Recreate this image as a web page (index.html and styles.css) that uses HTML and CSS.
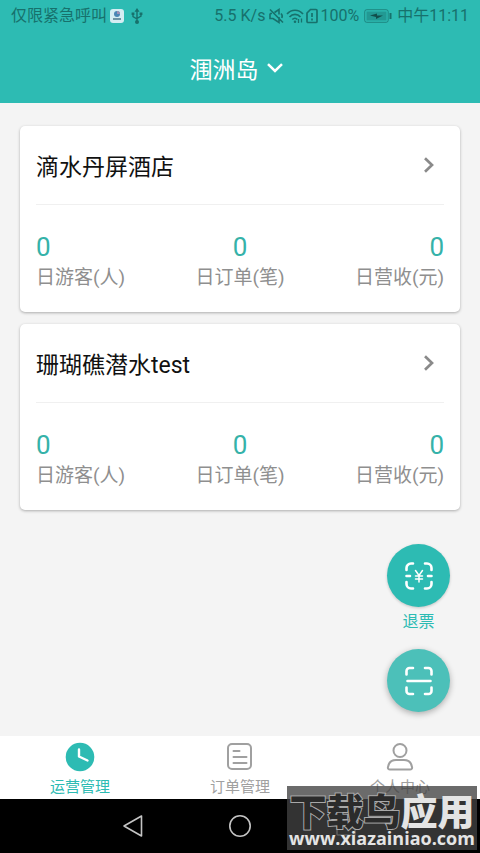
FILE: index.html
```html
<!DOCTYPE html>
<html lang="zh-CN">
<head>
<meta charset="utf-8">
<meta name="viewport" content="width=device-width, initial-scale=1">
<title>运营管理</title>
<link rel="stylesheet" href="styles.css">
</head>
<body>
<header class="top">
  <div class="status">
    <div class="status-group">
      <span>仅限紧急呼叫</span>
      <svg class="app-icon" width="14" height="14" viewBox="0 0 14 14"><rect width="14" height="14" rx="3" fill="#d5edf3"/><circle cx="7" cy="5" r="3" fill="#4a86b5"/><path d="M7 2a3 3 0 0 1 3 3L7 5z" fill="#a08fb5"/><path d="M3 10h8" stroke="#436d82" stroke-width="1.4"/></svg>
      <svg class="usb-icon" width="12" height="16" viewBox="0 0 12 16" fill="none" stroke="currentColor" stroke-width="1.4"><path d="M6 2v11M2 6v2.500l4 2.500M10 6v2L6 10.500"/><path d="M6 0 8.500 3.800h-5zM.6 4.500h2.800v2.500H.6zM8.600 4.500h2.800v2.500H8.600z" fill="currentColor" stroke="none"/><circle cx="6" cy="13.900" r="2" fill="currentColor" stroke="none"/></svg>
    </div>
    <div class="status-group status-right">
      <span>5.5 K/s</span>
      <svg class="mute" width="15" height="16" viewBox="0 0 15 16" fill="none" stroke="currentColor" stroke-width="1.600"><path d="M1 5.500v5h3l6 4V9M5.500 4.500 10 1.500v5M1 5.500h2M1 1.500l13 13M12 5.500c1 1 1.500 3 .8 4.500"/></svg>
      <svg width="18" height="16" viewBox="0 0 18 16" fill="none" stroke="currentColor" stroke-width="1.700"><path d="M1 6c4.500-5 11.500-5 16 0M3.500 9c3.200-3.500 7.800-3.500 11 0M6.300 11.500c1.700-1.700 3.700-1.700 5 0"/><circle cx="9" cy="13.800" r="1.300" fill="currentColor" stroke="none"/><path d="M12.500 11v4M15.500 10.500v4" stroke-width="1.300"/></svg>
      <svg width="12" height="16" viewBox="0 0 12 16" fill="none" stroke="currentColor" stroke-width="1.700"><path d="M4.500 1.500H10a1 1 0 0 1 1 1v11a1 1 0 0 1-1 1H2a1 1 0 0 1-1-1V5zM6 5v4M6 10.500v2"/></svg>
      <span>100%</span>
      <svg class="battery" width="28" height="14" viewBox="0 0 28 14"><rect x=".7" y=".7" width="23.500" height="12.600" rx="2" fill="none" stroke="currentColor" stroke-opacity=".7"/><rect x="2.500" y="2.500" width="20" height="9" fill="currentColor" opacity=".45"/><path d="M6 6.500l7-2v2h6l-7 3.500V8z" fill="#114e4b"/><path d="M26.500 4v6" stroke="currentColor" stroke-width="2"/></svg>
      <span>中午11:11</span>
    </div>
  </div>
  <button class="place" type="button"><span>涠洲岛</span>
    <svg width="16" height="10" viewBox="0 0 16 10" fill="none" stroke="currentColor" stroke-width="2.500"><path d="M1 1.200 8 8l7-6.800"/></svg>
  </button>
</header>

<main class="content">
  <section class="card">
    <a class="card-head" href="#hotel"><h2>滴水丹屏酒店</h2>
      <svg width="10" height="16" viewBox="0 0 10 16" fill="none" stroke="currentColor" stroke-width="2.700"><path d="M1 1.200 8 8l-7 6.800"/></svg></a>
    <dl class="stats">
      <div><dt>日游客(人)</dt><dd>0</dd></div>
      <div><dt>日订单(笔)</dt><dd>0</dd></div>
      <div><dt>日营收(元)</dt><dd>0</dd></div>
    </dl>
  </section>
  <section class="card">
    <a class="card-head" href="#diving"><h2>珊瑚礁潜水test</h2>
      <svg width="10" height="16" viewBox="0 0 10 16" fill="none" stroke="currentColor" stroke-width="2.700"><path d="M1 1.200 8 8l-7 6.800"/></svg></a>
    <dl class="stats">
      <div><dt>日游客(人)</dt><dd>0</dd></div>
      <div><dt>日订单(笔)</dt><dd>0</dd></div>
      <div><dt>日营收(元)</dt><dd>0</dd></div>
    </dl>
  </section>

  <div class="actions">
    <button class="fab" type="button" aria-labelledby="refund">
      <svg width="28" height="28" viewBox="0 0 28 28" fill="none" stroke="currentColor" stroke-width="2.600" stroke-linecap="round"><path d="M1.500 8V6A4.500 4.500 0 0 1 6 1.500h2M20 1.500h2A4.500 4.500 0 0 1 26.500 6v2M26.500 20v2a4.500 4.500 0 0 1-4.500 4.500h-2M8 26.500H6A4.500 4.500 0 0 1 1.500 22v-2M1.500 14h3.500M23 14h3.500"/><path d="M10.500 8.500 14 13.500l3.500-5M14 13.500v6.500M10.500 14h7M10.500 17h7" stroke-width="1.500"/></svg>
    </button>
    <span class="fab-label" id="refund">退票</span>
    <button class="fab fab-scan" type="button" aria-label="扫一扫">
      <svg width="30" height="30" viewBox="0 0 30 30" fill="none" stroke="currentColor" stroke-width="2.600" stroke-linecap="round"><path d="M2.500 8.500V5a3 3 0 0 1 3-3H9M21 2h3.500a3 3 0 0 1 3 3v3.500M27.500 21.500V25a3 3 0 0 1-3 3H21M9 28H5.500a3 3 0 0 1-3-3v-3.500M3.500 15h23"/></svg>
    </button>
  </div>
</main>

<footer class="bottom">
  <nav class="tabs">
    <a class="tab tab-active" href="#operate">
      <svg width="30" height="30" viewBox="0 0 30 30"><circle cx="15" cy="15" r="14.300" fill="currentColor"/><path d="M14 7.500v7l8.500 4" fill="none" stroke="#fff" stroke-width="2.400" stroke-linecap="round" stroke-linejoin="round"/></svg>
      <span>运营管理</span></a>
    <a class="tab" href="#orders">
      <svg width="30" height="30" viewBox="0 0 30 30" fill="none" stroke="currentColor" stroke-width="2" stroke-linecap="round"><rect x="3" y="2" width="23" height="25" rx="4"/><path d="M8.500 9h6M8.500 15h13M8.500 21h13"/></svg>
      <span>订单管理</span></a>
    <a class="tab" href="#me">
      <svg width="30" height="30" viewBox="0 0 30 30" fill="none" stroke="currentColor" stroke-width="2"><circle cx="15" cy="8.500" r="6.500"/><path d="M5 27.500h20c1.500 0 2.300-.8 2.100-2.200-.7-5-3.600-7.300-8.100-7.300h-8c-4.500 0-7.400 2.300-8.100 7.300-.2 1.400.6 2.200 2.100 2.200z"/></svg>
      <span>个人中心</span></a>
  </nav>
  <div class="system">
    <button type="button" aria-label="返回"><svg width="22" height="24" viewBox="0 0 22 24" fill="none" stroke="currentColor" stroke-width="1.600" stroke-linejoin="round"><path d="M2 12 19.500 2v20z"/></svg></button>
    <button type="button" aria-label="主页"><svg width="24" height="24" viewBox="0 0 24 24" fill="none" stroke="currentColor" stroke-width="1.600"><circle cx="12" cy="12" r="10.200"/></svg></button>
    <button type="button" aria-label="最近"><svg width="22" height="20" viewBox="0 0 22 20" fill="none" stroke="currentColor" stroke-width="1.600"><rect x="1" y="1" width="18" height="18" rx="1"/></svg></button>
  </div>
  <div class="mark">
    <div class="mark-name"><span class="mark-dark">下载鸟</span>应用</div>
    <div class="mark-url">www.xiazainiao.com</div>
  </div>
</footer>
</body>
</html>
```
FILE: styles.css
```css
:root {
  --teal: #2dbbb3;
  --grey: #8f8f8f;
}
* { box-sizing: border-box; }
body {
  margin: 0;
  min-height: 100vh;
  display: flex;
  flex-direction: column;
  background: #f4f4f4;
  font-family: Roboto, "Noto Sans CJK SC", sans-serif;
}
svg { display: block; flex: none; }
button {
  padding: 0;
  border: 0;
  background: none;
  color: inherit;
  font: inherit;
}
a { color: inherit; text-decoration: none; }
h2, dl, dd { margin: 0; font-weight: 400; }

.top { background: var(--teal); color: #fff; }
.status {
  display: flex;
  justify-content: space-between;
  height: 32px;
  padding: 0 11px;
  color: #17716c;
  font-size: 16px;
  line-height: 34px;
  white-space: nowrap;
}
.status-group { display: flex; align-items: center; gap: 3px; }
.status-right { gap: 2px; }
.mute { margin-left: 2px; }
.usb-icon { margin-left: 4px; }
.battery { margin: 0 3px; }
.place {
  display: flex;
  align-items: center;
  justify-content: center;
  gap: 8px;
  width: 100%;
  height: 71px;
  padding-right: 8px;
  font-size: 23px;
}

.content {
  position: relative;
  flex: 1;
  display: flex;
  flex-direction: column;
  gap: 12px;
  padding: 23px 20px;
}
.card {
  padding: 0 16px 19px;
  border-radius: 5px;
  background: #fff;
  box-shadow: 0 1px 3px rgba(0, 0, 0, 0.3);
}
.card-head {
  display: flex;
  align-items: center;
  justify-content: space-between;
  height: 79px;
  padding-right: 10px;
  border-bottom: 1px solid #f0f0f0;
  color: #8a8a8a;
}
.card-head h2 { color: #111; font-size: 23px; }
.stats {
  display: flex;
  justify-content: space-between;
  padding-top: 28px;
}
.stats div { display: flex; flex-direction: column-reverse; text-align: center; }
.stats div:first-child { text-align: left; }
.stats div:last-child { text-align: right; }
.stats dt { color: var(--grey); font-size: 19px; line-height: 31px; }
.stats dd { color: #35b2a9; font-size: 26px; line-height: 29px; }

.actions {
  position: absolute;
  right: 30px;
  bottom: 24px;
  display: flex;
  flex-direction: column;
  align-items: center;
}
.fab {
  display: grid;
  place-items: center;
  width: 63px;
  height: 63px;
  border-radius: 50%;
  background: var(--teal);
  color: #fff;
  box-shadow: 0 1px 3px rgba(0, 0, 0, 0.2);
}
.fab-scan { background: #4cc0b9; box-shadow: 0 2px 6px rgba(0, 0, 0, 0.3); }
.fab-label {
  padding: 2px 0 14px;
  color: var(--teal);
  font-size: 16px;
  line-height: 26px;
}

.bottom { position: relative; }
.tabs { display: flex; height: 63px; background: #fff; }
.tab {
  flex: 1;
  display: flex;
  flex-direction: column;
  align-items: center;
  padding-top: 6px;
  color: #a0a0a0;
  font-size: 15px;
  line-height: 30px;
}
.tab-active { color: var(--teal); }
.system {
  display: flex;
  align-items: center;
  justify-content: center;
  gap: 84px;
  height: 54px;
  background: #000;
  color: #c4c4c4;
}
.mark {
  position: absolute;
  right: 3px;
  bottom: 3px;
  width: 190px;
  height: 64px;
  padding-top: 5px;
  background: rgba(65, 65, 65, 0.78);
  color: #e4e4e4;
  text-align: center;
  white-space: nowrap;
}
.mark-name {
  font-family: "Noto Sans CJK SC", sans-serif;
  font-size: 37px;
  font-weight: 900;
  line-height: 38px;
}
.mark-dark {
  color: #2b2b2b;
  -webkit-text-stroke: 2px #a8a8a8;
  paint-order: stroke fill;
}
.mark-url {
  font-family: "Open Sans", sans-serif;
  font-size: 18px;
  font-weight: 700;
  line-height: 18px;
}
```
